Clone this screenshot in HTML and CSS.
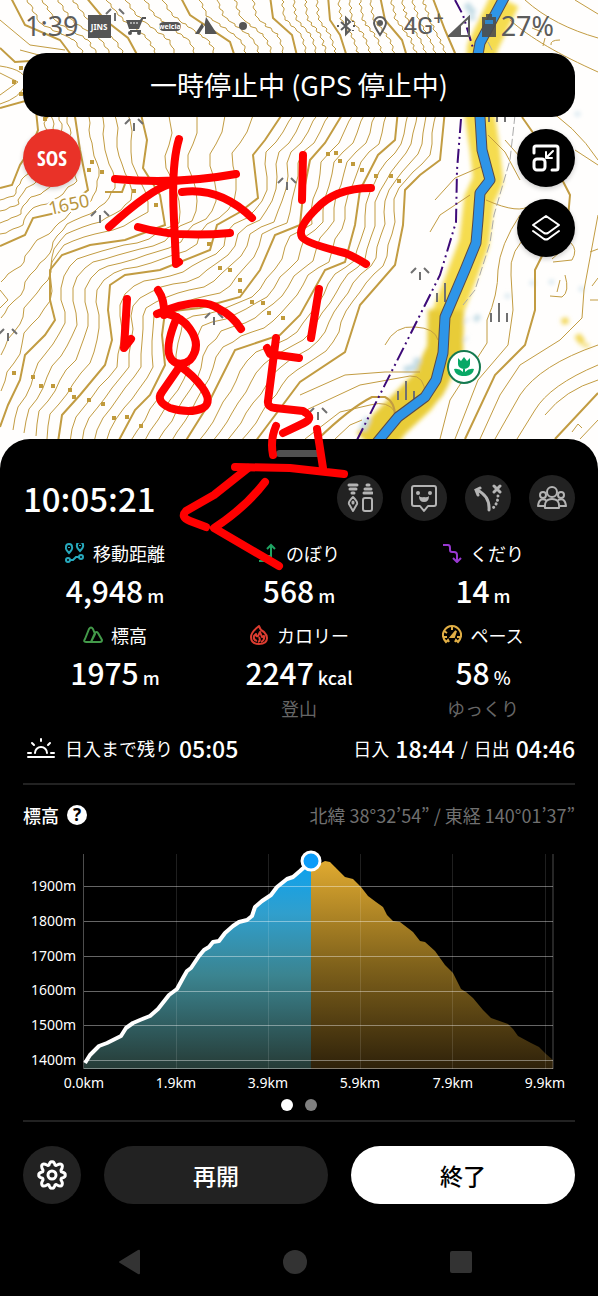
FILE: index.html
```html
<!DOCTYPE html>
<html lang="ja">
<head>
<meta charset="utf-8">
<meta name="viewport" content="width=device-width, initial-scale=1">
<title>活動記録</title>
<link rel="stylesheet" href="styles.css">
</head>
<body>
<div class="screen">
  <section class="map">
    <svg class="map-canvas" viewBox="0 0 598 480" preserveAspectRatio="xMidYMin slice" aria-hidden="true">
      <defs>
        <filter id="soft" x="-20%" y="-20%" width="140%" height="140%"><feGaussianBlur stdDeviation="2"/></filter>
        <g id="tree"><path d="M-9 0l5-5M9 0l-5-5M0 -1v8"/></g>
        <g id="reeds"><path d="M-8 8v-9M0 8v-19M8 8v-9"/></g>
      </defs>
      <rect width="598" height="480" fill="#fffefd"/>
      <g filter="url(#soft)" fill="none" stroke-linejoin="round">
        <path d="M505 0L482 48L480 117L485 150L488 180L479 200L474 243L462 275L446 317L442 353L434 380L420 400L394 424L376 450" stroke="#f5dc50" stroke-width="30"/>
        <path d="M446 310L445 350L428 385L388 425L370 445" stroke="#e8cc38" stroke-width="36"/>
        <path d="M577 335l6 8M564 318l2 6M586 344v3" stroke="#f2d75a" stroke-width="7"/>
        <path d="M475 316l4 4M465 339l1 1M466 320l1 1M416 358l2 6M404 370l14-4M362 430l6-12M466 4l8 10M472 16v4" stroke="#c5dde6" stroke-width="7"/>
        <path d="M507 296h1M551 282h1M532 283h1M581 289h1M577 114h1" stroke="#d9e8f0" stroke-width="5" stroke-linecap="round"/>
      </g>
      <g id="contours"></g>
      <g class="contour">
        <path d="M510 20C530 38 560 55 598 72M525 0C545 18 570 30 598 38M575 0L598 14M470 60L500 80M540 105Q575 125 598 160M505 140L520 157M575 150L598 165M488 135L505 152L520 180M435 200L455 178L485 165M430 232L440 215L470 195"/>
        <path d="M486 200Q520 215 530 205M520 215Q500 245 498 270Q498 295 487 320L487 343L450 400L440 439M533 230Q508 250 511 275L513 310L508 345L478 380L455 439M598 215L584 290L582 318L560 340L520 365L500 395L480 439M598 345Q540 365 520 395L495 439M598 365Q550 385 535 410L517 439M598 380Q565 390 545 415M598 420L580 439"/>
        <path d="M385 345Q395 325 415 327Q435 328 438 340M300 395L345 375L385 372L420 372M300 413L360 385L410 376Q425 375 425 395M305 439L340 412L370 405Q388 400 395 412M335 439L350 425L362 420"/>
        <path d="M571 243Q578 250 572 260L553 262M560 252l-8 7M598 249l-8 3M565 275Q570 292 562 297L550 296M560 280l-3 12M598 278l-6 8M598 300h-8M572 432l6-8 4 4M532 28l10 4M545 38l-2 8M560 40q-10 0-9 5"/>
        <path d="M0 73L18 82L0 95M0 66Q28 70 26 84Q20 98 0 104M0 290L8 300L0 308M0 20L30 45L65 50M20 50L50 58"/>
      </g>
      <g class="contour contour-index">
        <path d="M465 439L495 375L525 345L535 310L535 270L545 250L568 218L570 195L552 160L522 117M555 439L598 393M318 439Q350 408 372 397L385 397Q396 402 395 420M0 48L15 62L45 60M0 108L25 101L48 118M105 192L122 192L125 184"/>
      </g>
      <path d="M12 80h4v4h-4zM19 66h4v4h-4zM19 92h4v4h-4zM43 117h4v4h-4zM87 168h4v4h-4zM100 170h4v4h-4zM90 160h4v4h-4zM132 189h4v4h-4zM154 203h4v4h-4zM207 242h4v4h-4zM218 266h4v4h-4zM228 268h4v4h-4zM238 278h4v4h-4zM238 289h4v4h-4zM250 300h4v4h-4zM261 301h4v4h-4zM267 311h4v4h-4zM281 316h4v4h-4zM12 371h4v4h-4zM31 375h4v4h-4zM39 384h4v4h-4zM51 384h4v4h-4zM68 388h4v4h-4zM72 395h4v4h-4zM87 398h4v4h-4zM101 402h4v4h-4zM112 416h4v4h-4zM125 415h4v4h-4zM139 424h4v4h-4zM334 151h4v4h-4zM326 152h4v4h-4zM338 159h4v4h-4zM351 162h4v4h-4zM360 168h4v4h-4zM374 174h4v4h-4zM389 174h4v4h-4zM397 179h4v4h-4z" fill="#c09a3c"/>
      <text class="contour-label" x="50" y="215" transform="rotate(-12 50 215)">1650</text>
      <g class="map-symbols">
        <use href="#tree" x="115" y="14"/><use href="#tree" x="134" y="124"/><use href="#tree" x="100" y="216"/><use href="#tree" x="287" y="183"/><use href="#tree" x="8" y="334"/><use href="#tree" x="214" y="318"/><use href="#tree" x="420" y="273"/><use href="#tree" x="318" y="413"/>
        <use href="#reeds" x="499" y="314"/><use href="#reeds" x="406" y="392"/><use href="#reeds" x="497" y="114"/><path d="M437 302v-9M445 302v-19"/>
      </g>
      <path d="M488 42L498 62M515 115L510 160L494 215L490 243L475 290L463 305" fill="none" stroke="#a9a9a9" stroke-dasharray="9 3"/>
      <path d="M455 0L463 15L473 48M461 119L457 170L456 222L440 275L405 345L357 440" fill="none" stroke="#3d0a78" stroke-width="2" stroke-dasharray="14 4 2 4 2 4"/>
      <g fill="none" stroke-linejoin="round">
        <path d="M505 -4L480 43L477 60L480 117L482 150L490 180L480 193L478 220L476 243L465 270L445 317L443 353L436 380L425 397L398 417L374 446" stroke="#5a4a48" stroke-width="11"/>
        <path d="M505 -4L480 43L477 60L480 117L482 150L490 180L480 193L478 220L476 243L465 270L445 317L443 353L436 380L425 397L398 417L374 446" stroke="#2e95e8" stroke-width="9"/>
      </g>
      <g transform="translate(464 367)">
        <circle r="16" fill="#fff" stroke="#157a50" stroke-width="2"/>
        <path d="M-6 -9l3 3 3-4 3 4 3-3v6a6 5 0 0 1-12 0zM-1 1h2v4q4-4 9-3-1 6-8 7h-4q-7-1-8-7 5-1 9 3z" fill="#08a866"/>
      </g>
    </svg>

    <header class="status">
      <span class="status-clock">1:39</span>
      <span class="status-jins">JINS</span>
      <svg class="status-cart" width="22" height="20" viewBox="0 0 22 20" aria-hidden="true"><path d="M1 4h14l2-3h4v2h-3l-4 10H4z" fill="#555"/><path d="M5 15h11" stroke="#555" stroke-width="2"/><circle cx="5" cy="17" r="2" fill="#555"/><circle cx="14" cy="17" r="2" fill="#555"/><path d="M6 6v2M9 6v2M12 6v2" stroke="#fff"/></svg>
      <span class="status-shop">welcia</span>
      <svg class="status-tent" width="22" height="20" viewBox="0 0 22 20" aria-hidden="true"><path d="M0 18L7 7l2 4 2-10 11 17h-12V9L4 18z" fill="#555"/></svg>
      <span class="status-dot"></span>
      <span class="status-space"></span>
      <svg width="20" height="22" viewBox="0 0 20 22" fill="none" stroke="#5c5c5c" stroke-width="2" aria-hidden="true"><path d="M5 7l9 8-4 4V3l4 4-9 8M1 11h2M17 11h2M17 6v1M17 15v1"/></svg>
      <svg class="status-pin" width="16" height="22" viewBox="0 0 16 22" aria-hidden="true"><path d="M8 20C4 14 2 11 2 8a6 6 0 0 1 12 0c0 3-2 6-6 12z" fill="none" stroke="#5c5c5c" stroke-width="2"/><circle cx="8" cy="8" r="3" fill="#5c5c5c"/></svg>
      <span class="status-net">4G<sup>+</sup></span>
      <svg width="22" height="22" viewBox="0 0 22 22" aria-hidden="true"><path d="M1 21L21 2v19z" fill="none" stroke="#5c5c5c" stroke-width="2"/><path d="M0 22L13 9v13z" fill="#5c5c5c"/></svg>
      <svg class="status-battery" width="16" height="24" viewBox="0 0 16 24" aria-hidden="true"><path d="M5 0h6v3h4v20H1V3h4z" fill="#4d4d4d" fill-opacity=".9"/><path d="M4 6h8v4H4z" fill="#2e86c8"/></svg>
      <span class="status-percent">27%</span>
    </header>

    <div class="banner" role="status">一時停止中 (GPS 停止中)</div>

    <div class="map-controls">
      <button class="round round-sos" type="button">SOS</button>
      <div class="map-tools">
        <button class="round round-tool" type="button" aria-label="縮小表示">
          <svg width="28" height="28" viewBox="0 0 28 28" fill="none" stroke="#fff" stroke-width="3" stroke-linecap="round" stroke-linejoin="round"><path d="M2 9V4q0-2 2-2h20q2 0 2 2v20q0 2-2 2h-4"/><rect x="2" y="15" width="11" height="11" rx="3"/><path d="M21 7l-6 6M14 8v6h6" stroke-width="2"/></svg>
        </button>
        <button class="round round-tool" type="button" aria-label="レイヤー">
          <svg width="30" height="28" viewBox="0 0 30 28" fill="none" stroke="#fff" stroke-width="2" stroke-linecap="round" stroke-linejoin="round"><path d="M15 2L28 11 17 19q-2 1-4 0L2 11zM2 17l11 8q2 1 4 0l11-8"/></svg>
        </button>
      </div>
    </div>
  </section>

  <main class="panel">
    <div class="handle"></div>

    <div class="panel-top">
      <div class="timer">10:05:21</div>
      <div class="actions">
        <button class="action" type="button" aria-label="ペン">
          <svg width="26" height="30" viewBox="0 0 26 30" fill="none" stroke="#b4b4b4" stroke-width="2" stroke-linecap="round" stroke-linejoin="round"><path d="M2 2h8M3 6h6M5 10h2M20 2h2M18 6h6M17 10h8" stroke-width="3"/><path d="M6 14q-5 5-4 7l4 7 4-7q1-2-4-7z"/><rect x="16" y="15" width="9" height="13" rx="2"/><path d="M6 19v1" stroke-width="3"/></svg>
        </button>
        <button class="action" type="button" aria-label="フィールドメモ">
          <svg width="28" height="30" viewBox="0 0 28 30" fill="none" stroke="#b4b4b4" stroke-width="2" stroke-linejoin="round"><path d="M4 3h20q2 0 2 2v16q0 2-2 2h-6l-4 5-4-5H4q-2 0-2-2V5q0-2 2-2z"/><g fill="#b4b4b4" stroke="none"><circle cx="8" cy="10" r="2"/><circle cx="20" cy="10" r="2"/><path d="M9 13q2 2 5 1 3 1 5-1 0 6-5 6t-5-6z"/></g></svg>
        </button>
        <button class="action" type="button" aria-label="ルート変更">
          <svg width="28" height="28" viewBox="0 0 28 28" fill="none" stroke="#b4b4b4" stroke-width="3" stroke-linecap="round"><path d="M15 26q1-14-12-20M6 4L2 6l2 5"/><path d="M20 2l6 6M26 2l-6 6"/><path d="M24 12q0 7-5 12" stroke-dasharray="0.100 4"/></svg>
        </button>
        <button class="action" type="button" aria-label="メンバー">
          <svg width="30" height="24" viewBox="0 0 30 24" fill="none" stroke="#b4b4b4" stroke-width="2" stroke-linejoin="round"><circle cx="15" cy="6" r="5"/><circle cx="6" cy="9" r="3"/><circle cx="24" cy="9" r="3"/><path d="M8 22q-1-9 7-9t7 9zM9 14q-7-3-8 6h7M21 14q7-3 8 6h-7"/></svg>
        </button>
      </div>
    </div>

    <dl class="stats">
      <div class="stat">
        <dt><svg width="20" height="20" viewBox="0 0 20 20" fill="none" stroke="#27a9bd" stroke-width="2"><path d="M4 10Q0 6 1 4a3 3 0 0 1 6 0Q8 6 4 10zM15 8q-4-4-3-6a3 3 0 0 1 6 0q1 2-3 6z"/><path d="M4 4v1M15 2v1"/><circle cx="3" cy="17" r="2"/><circle cx="16" cy="14" r="2"/><path d="M5 17h3l3-3h3"/></svg>移動距離</dt>
        <dd>4,948<small>m</small></dd>
      </div>
      <div class="stat">
        <dt><svg width="20" height="20" viewBox="0 0 20 20" fill="none" stroke="#1fa463" stroke-width="2"><path d="M1 18h5v-5h7V2M9 6l4-4 4 4"/></svg>のぼり</dt>
        <dd>568<small>m</small></dd>
      </div>
      <div class="stat">
        <dt><svg width="20" height="20" viewBox="0 0 20 20" fill="none" stroke="#9838d0" stroke-width="2" stroke-linejoin="round"><path d="M1 2h5q2 0 2 3v2q0 2 2 2h2q3 0 3 3v6M11 15l4 4 4-4"/></svg>くだり</dt>
        <dd>14<small>m</small></dd>
      </div>
      <div class="stat">
        <dt><svg width="20" height="20" viewBox="0 0 20 20" fill="none" stroke="#439a4a" stroke-width="2" stroke-linejoin="round"><path d="M2 14L6 4q2-3 4 0l2 5-4 8H3q-3 0-1-3zM8 17l4-9q2-2 3 0l4 7q0 2-2 2z"/></svg>標高</dt>
        <dd>1975<small>m</small></dd>
      </div>
      <div class="stat">
        <dt><svg width="20" height="20" viewBox="0 0 20 20" fill="none" stroke="#dc3c30" stroke-width="2" stroke-linejoin="round"><path d="M10 1q1 4 5 6 3 3 3 6 0 6-8 6t-8-7q0-5 8-11z"/><path d="M8 16q-4-1-3-5l2-2q0 3 2 2l2-4 2 5 2-1q1 4-3 6M9 17q3-1 1-5"/></svg>カロリー</dt>
        <dd>2247<small>kcal</small></dd>
        <dd class="stat-note">登山</dd>
      </div>
      <div class="stat">
        <dt><svg width="20" height="20" viewBox="0 0 20 20" fill="none" stroke="#e0ae45" stroke-width="2"><path d="M7 17L6 15l-2 2q-5-6-2-11 3-5 8-5t8 5q3 5-2 11l-2-2-1 2"/><path d="M9 12l5-6-2 6zM10 1v4M2 6l3 2M2 12h3M15 12h3"/></svg>ペース</dt>
        <dd>58<small>%</small></dd>
        <dd class="stat-note">ゆっくり</dd>
      </div>
    </dl>

    <div class="sun">
      <svg class="sun-icon" width="30" height="22" viewBox="0 0 30 22" fill="none" stroke="#fff" stroke-width="2" stroke-linecap="round" aria-hidden="true"><path d="M2 16h3M25 16h3M9 16a6 6 0 0 1 12 0M15 2v2M6 6l2 2M24 6l-2 2M2 20h26"/></svg>
      <div class="sun-group"><span>日入まで残り</span><b>05:05</b></div>
      <div class="sun-group sun-right"><span>日入</span><b>18:44</b><span>/</span><span>日出</span><b>04:46</b></div>
    </div>

    <hr class="rule">

    <div class="elevation-head">
      <h2>標高</h2>
      <button class="help" type="button" aria-label="標高のヘルプ">?</button>
      <span class="coords">北緯 38°32’54” / 東経 140°01’37”</span>
    </div>

    <svg class="chart" viewBox="0 0 552 252" role="img" aria-label="標高グラフ">
      <defs>
        <linearGradient id="done" x1="0" y1="18" x2="0" y2="226" gradientUnits="userSpaceOnUse"><stop offset="0" stop-color="#0ba2f0"/><stop offset=".25" stop-color="#309fcd"/><stop offset=".55" stop-color="#3b8490"/><stop offset="1" stop-color="#263b36"/></linearGradient>
        <linearGradient id="ahead" x1="0" y1="18" x2="0" y2="226" gradientUnits="userSpaceOnUse"><stop offset="0" stop-color="#e0aa30"/><stop offset=".5" stop-color="#80621b"/><stop offset="1" stop-color="#2e210a"/></linearGradient>
      </defs>
      <path fill="url(#done)" d="M61 226V220L67 212L76 203L84 200L92 196L98 193L103 185L110 180L117 177L127 173L135 166L146 152L154 146L160 135L164 128L168 125L176 113L181 107L186 104L190 99L196 98L202 90L210 83L216 79L224 77L229 73L232 64L239 58L248 52L254 44L264 36L270 34L277 28L288 18V226z"/>
      <path fill="url(#ahead)" d="M288 226V18L298 20L302 18L307 19L312 24L322 34L330 36L338 44L345 53L353 59L360 64L364 72L370 78L377 79L390 89L397 98L402 99L412 108L422 122L430 130L438 146L443 149L450 155L460 167L468 175L485 181L490 186L495 193L508 200L516 204L523 211L530 217V226z"/>
      <path class="grid-y" d="M61 43.500H530M61 78.500H530M61 113.500H530M61 148.500H530M61 182.500H530M61 217.500H530M61 225.500H530"/>
      <path class="grid-x" d="M153.500 11V226M245.500 11V226M337.500 11V226M429.500 11V226M522.500 11V226"/>
      <path class="grid-edge" d="M60.500 11V226M530 11V226"/>
      <path class="track" d="M62 220L67 212L76 203L84 200L92 196L98 193L103 185L110 180L117 177L127 173L135 166L146 152L154 146L160 135L164 128L168 125L176 113L181 107L186 104L190 99L196 98L202 90L210 83L216 79L224 77L229 73L232 64L239 58L248 52L254 44L264 36L270 34L277 28L288 18"/>
      <circle cx="288" cy="18" r="9" fill="#0c9cf8" stroke="#fff" stroke-width="3"/>
      <g class="axis axis-y">
        <text x="53" y="48">1900m</text><text x="53" y="83">1800m</text><text x="53" y="118">1700m</text><text x="53" y="152">1600m</text><text x="53" y="187">1500m</text><text x="53" y="222">1400m</text>
      </g>
      <g class="axis axis-x">
        <text x="61" y="245">0.0km</text><text x="153" y="245">1.9km</text><text x="245" y="245">3.9km</text><text x="337" y="245">5.9km</text><text x="430" y="245">7.9km</text><text x="522" y="245">9.9km</text>
      </g>
    </svg>

    <div class="dots"><span class="dot dot-on"></span><span class="dot"></span></div>

    <hr class="rule rule-foot">

    <div class="buttons">
      <button class="gear" type="button" aria-label="設定">
        <svg width="30" height="30" viewBox="0 0 30 30" fill="none" stroke="#fff" stroke-width="3" stroke-linejoin="round"><path d="M12 5q1-4 3-3 2-1 3 3 1 1 2 0 4-2 5 0 1 2-1 5 0 2 1 2 4 1 3 3 1 2-3 3-1 0-1 2 2 3 1 5-1 2-5 0-1-1-2 0-1 4-3 3-2 1-3-3-1-1-2 0-4 2-5 0-1-2 1-5 0-2-1-2-4-1-3-3-1-2 3-3 1 0 1-2-2-3-1-5 1-2 5 0 1 1 2 0z"/><circle cx="15" cy="15" r="4"/></svg>
      </button>
      <button class="wide wide-dark" type="button">再開</button>
      <button class="wide wide-light" type="button">終了</button>
    </div>
  </main>

  <nav class="system-nav">
    <button type="button" aria-label="戻る"><svg width="26" height="26" viewBox="0 0 26 26"><path d="M23 2v22q0 2-2 1L3 14q-2-1 0-2L21 1q2-1 2 1z" fill="#333"/></svg></button>
    <button type="button" aria-label="ホーム"><svg width="26" height="26" viewBox="0 0 26 26"><circle cx="13" cy="13" r="12" fill="#333"/></svg></button>
    <button type="button" aria-label="履歴"><svg width="26" height="26" viewBox="0 0 26 26"><rect x="2" y="2" width="22" height="22" rx="2" fill="#333"/></svg></button>
  </nav>

  <svg class="scribble" viewBox="0 0 598 600" aria-hidden="true">
    <path d="M115 179Q175 185 236 174M179 139Q171 165 174 220L176 264L179 262M170 184Q150 190 109 227M182 192Q220 187 252 218M138 227Q175 238 230 233"/>
    <path d="M303 155L302 200M371 188Q335 188 316 209Q297 228 302 237Q305 243 345 253Q353 256 366 264"/>
    <path d="M127 299L124 348L131 339M158 290Q165 300 164 315M157 314Q200 295 219 309Q232 315 241 329M177 317Q163 350 172 360Q180 368 190 360Q202 346 190 329Q182 317 165 313M180 366L162 392Q155 401 170 408Q190 414 203 408Q213 402 202 387Q194 376 180 366"/>
    <path d="M267 348L270 354L299 358M276 338L268 401Q267 407 275 408L303 411Q315 418 304 423L283 433M319 289L311 338M276 426Q270 440 273 455M317 429L323 468M235 467L290 468L344 474"/>
    <path d="M248 468L214 495L186 511Q180 517 190 521L206 527M265 482Q245 508 214 528L279 566"/>
  </svg>
</div>
<script src="contours.js"></script>
</body>
</html>
```

FILE: contours.js
```js
// Index contours of each slope; the four lines between two neighbours are interpolated.
const slopes = [
  [
    [[0,188],[12,185],[20,165],[30,150],[38,130],[35,101]],
    [[0,246],[25,235],[33,218],[60,212],[88,190],[80,150],[74,110]],
    [[0,427],[8,405],[20,380],[25,355],[45,335],[55,320],[50,300],[50,270],[62,255],[90,245],[125,240],[165,225],[160,195],[143,168],[147,140],[140,110]],
    [[58,442],[62,415],[80,395],[105,365],[112,340],[108,310],[110,285],[125,275],[160,270],[210,250],[217,225],[240,212],[258,198],[253,155],[265,140],[285,110]],
    [[118,442],[135,410],[150,395],[165,365],[162,335],[165,312],[200,308],[240,297],[260,270],[275,235],[300,225],[303,195],[310,160],[325,143],[345,110]],
    [[185,442],[205,410],[220,380],[235,350],[280,335],[300,315],[325,270],[345,262],[355,225],[360,190],[378,155],[395,140],[398,110]],
    [[255,442],[300,382],[345,352],[360,305],[395,265],[403,225],[405,190],[420,175],[440,160],[445,110]]
  ],
  [
    [[10,-4],[25,25],[60,40],[75,60]],
    [[85,-4],[105,20],[128,38],[140,60]],
    [[180,-4],[190,15],[230,42],[236,60]],
    [[270,-4],[273,18],[292,35],[298,60]],
    [[328,-4],[330,20],[340,35],[348,60]],
    [[380,-4],[385,20],[402,40],[408,60]],
    [[432,-4],[445,30],[458,60]]
  ]
];

function resample(points, count) {
  const lengths = [0];
  for (let i = 1; i < points.length; i++) {
    lengths.push(lengths[i - 1] + Math.hypot(points[i][0] - points[i - 1][0], points[i][1] - points[i - 1][1]));
  }
  const total = lengths[lengths.length - 1];
  const out = [];
  let segment = 1;
  for (let i = 0; i < count; i++) {
    const at = total * i / (count - 1);
    while (segment < points.length - 1 && lengths[segment] < at) segment++;
    const t = (at - lengths[segment - 1]) / (lengths[segment] - lengths[segment - 1]);
    out.push([0, 1].map(k => points[segment - 1][k] + (points[segment][k] - points[segment - 1][k]) * t));
  }
  return out;
}

const layer = document.getElementById("contours");

function draw(points, className) {
  const path = document.createElementNS("http://www.w3.org/2000/svg", "path");
  path.setAttribute("class", className);
  path.setAttribute("d", "M" + points.map(p => p.map(Math.round).join(" ")).join("L"));
  layer.appendChild(path);
}

for (const lines of slopes) {
  lines.forEach((line, index) => {
    draw(line, "contour contour-index");
    if (index === lines.length - 1) return;
    const from = resample(line, 36);
    const to = resample(lines[index + 1], 36);
    for (let step = 1; step < 5; step++) {
      const t = step / 5;
      draw(from.map((p, i) => [
        p[0] + (to[i][0] - p[0]) * t + Math.sin(i * 1.7 + index) * 1.2,
        p[1] + (to[i][1] - p[1]) * t
      ]), "contour");
    }
  });
}
```

FILE: styles.css
```css
* { box-sizing: border-box; }

body {
  margin: 0;
  background: #000;
  color: #fff;
  font-family: "Noto Sans CJK JP", "Noto Sans", sans-serif;
}

button {
  padding: 0;
  border: 0;
  background: none;
  color: inherit;
  font: inherit;
  display: flex;
  align-items: center;
  justify-content: center;
}

.screen {
  position: relative;
  min-height: 100vh;
  overflow: hidden;
}

/* Map */
.map {
  position: relative;
  padding: 8px 23px 182px;
}

.map-canvas {
  position: absolute;
  inset: 0;
  width: 100%;
  height: calc(100% + 40px);
}

.contour { fill: none; stroke: #c29c42; stroke-width: 1; }
.contour-index { stroke-width: 2; }

.contour-label {
  fill: #b8953e;
  stroke: #fff;
  stroke-width: 4px;
  paint-order: stroke;
  font: 18px "Noto Sans", sans-serif;
}

.map-symbols { fill: none; stroke: #707070; stroke-width: 2; }

.status {
  position: relative;
  display: flex;
  align-items: center;
  height: 36px;
  padding: 0 19px 0 2px;
  color: #5c5c5c;
  font: 27px/36px "Noto Sans", sans-serif;
}

.status-jins {
  width: 23px;
  margin: 0 14px 0 9px;
  background: #555;
  color: #fff;
  font: bold 8px/23px "Noto Sans", sans-serif;
  text-align: center;
}

.status-shop {
  margin: 0 14px 0 12px;
  border-radius: 6px;
  background: #555;
  color: #fff;
  font: bold 7px/9px "Noto Sans", sans-serif;
}

.status-dot {
  width: 8px;
  height: 8px;
  margin-left: 22px;
  border-radius: 50%;
  background: #555;
}

.status-space { flex: 1; }
.status-pin { margin: 0 16px; }
.status-net { margin-right: 4px; font: 24px/36px Roboto, sans-serif; }
.status-net sup { font-size: 18px; line-height: 1; }
.status-battery { margin: 0 4px 0 11px; }
.status-percent { margin-right: 2px; }

.banner {
  position: relative;
  margin-top: 9px;
  border-radius: 23px;
  background: #000;
  font-size: 27px;
  line-height: 64px;
  text-align: center;
}

.map-controls {
  position: relative;
  display: flex;
  align-items: flex-start;
  justify-content: space-between;
  margin-top: 12px;
}

.map-tools { display: grid; gap: 12px; }

.round {
  width: 58px;
  height: 58px;
  border-radius: 50%;
  box-shadow: 0 2px 5px #0003;
}

.round-sos {
  background: #e93228;
  font: bold 21px "Liberation Sans Narrow", "Open Sans Condensed", "Liberation Sans", sans-serif;
}

.round-tool { background: #000; }

/* Panel */
.panel {
  position: relative;
  padding: 11px 23px 0;
  border-radius: 30px 30px 0 0;
  background: #000;
}

.handle {
  width: 46px;
  height: 7px;
  margin: 0 auto;
  border-radius: 4px;
  background: #505050;
}

.panel-top {
  display: flex;
  align-items: center;
  justify-content: space-between;
  margin-top: 18px;
}

.timer {
  font-size: 33px;
  font-weight: 500;
  line-height: 46px;
}

.actions { display: flex; gap: 18px; }

.action {
  width: 46px;
  height: 46px;
  border-radius: 50%;
  background: #222;
}

.stats {
  display: grid;
  grid-template-columns: repeat(3, 1fr);
  gap: 13px 0;
  margin: 20px 0 0;
  text-align: center;
}

.stat dt {
  display: flex;
  align-items: center;
  justify-content: center;
  gap: 8px;
  font-size: 18px;
  line-height: 24px;
}

.stat dd {
  margin: 5px 0 0;
  font-size: 30px;
  font-weight: 500;
  line-height: 40px;
}

.stat small { margin-left: 4px; font-size: 18px; line-height: 1; }

.stat .stat-note {
  margin-top: 4px;
  color: #666;
  font-size: 18px;
  font-weight: 400;
  line-height: 24px;
}

.sun {
  display: flex;
  align-items: center;
  margin-top: 13px;
  font-size: 18px;
  line-height: 30px;
}

.sun-icon { margin: 0 9px 0 3px; }
.sun-group { display: flex; align-items: center; gap: 6px; }
.sun b { font-size: 23px; font-weight: 500; }
.sun-right { margin-left: auto; }

.rule {
  height: 2px;
  margin: 20px 0 0;
  border: 0;
  background: #222;
}

.elevation-head {
  display: flex;
  align-items: center;
  margin-top: 18px;
  line-height: 24px;
}

.elevation-head h2 { margin: 0; font-size: 18px; font-weight: 500; }

.help {
  width: 20px;
  height: 20px;
  margin-left: 8px;
  border-radius: 50%;
  background: #fff;
  color: #000;
  font: bold 17px/20px "Noto Sans", sans-serif;
}

.coords { margin-left: auto; color: #707070; font-size: 18px; }

.chart {
  display: block;
  width: 100%;
  margin-top: 16px;
}

.grid-y { stroke: #fff; stroke-opacity: .4; }
.grid-x { stroke: #fff; stroke-opacity: .12; }
.grid-edge { stroke: #fff; stroke-opacity: .3; }

.track {
  fill: none;
  stroke: #fff;
  stroke-width: 4;
  stroke-linejoin: round;
}

.axis { fill: #fff; font: 14px "Noto Sans", sans-serif; }
.axis-y { text-anchor: end; }
.axis-x { text-anchor: middle; }

.dots {
  display: flex;
  justify-content: center;
  gap: 12px;
  margin-top: 4px;
}

.dot { width: 12px; height: 12px; border-radius: 50%; background: #808080; }
.dot-on { background: #fff; }
.rule-foot { margin-top: 9px; }

.buttons {
  display: flex;
  gap: 23px;
  margin-top: 24px;
}

.gear {
  flex: none;
  width: 58px;
  height: 58px;
  border-radius: 50%;
  background: #222;
}

.wide {
  flex: 1;
  height: 58px;
  border-radius: 29px;
  font-size: 23px;
  font-weight: 500;
}

.wide-dark { background: #222; }
.wide-light { background: #fff; color: #000; }

.system-nav {
  display: flex;
  justify-content: space-around;
  padding: 45px 54px 20px 47px;
}

.system-nav button { width: 26px; height: 26px; }

/* Handwriting over the map and the panel */
.scribble {
  position: absolute;
  top: 0;
  left: 0;
  width: 100%;
  fill: none;
  stroke: #f00;
  stroke-width: 8;
  stroke-linecap: round;
  stroke-linejoin: round;
  pointer-events: none;
}
```
